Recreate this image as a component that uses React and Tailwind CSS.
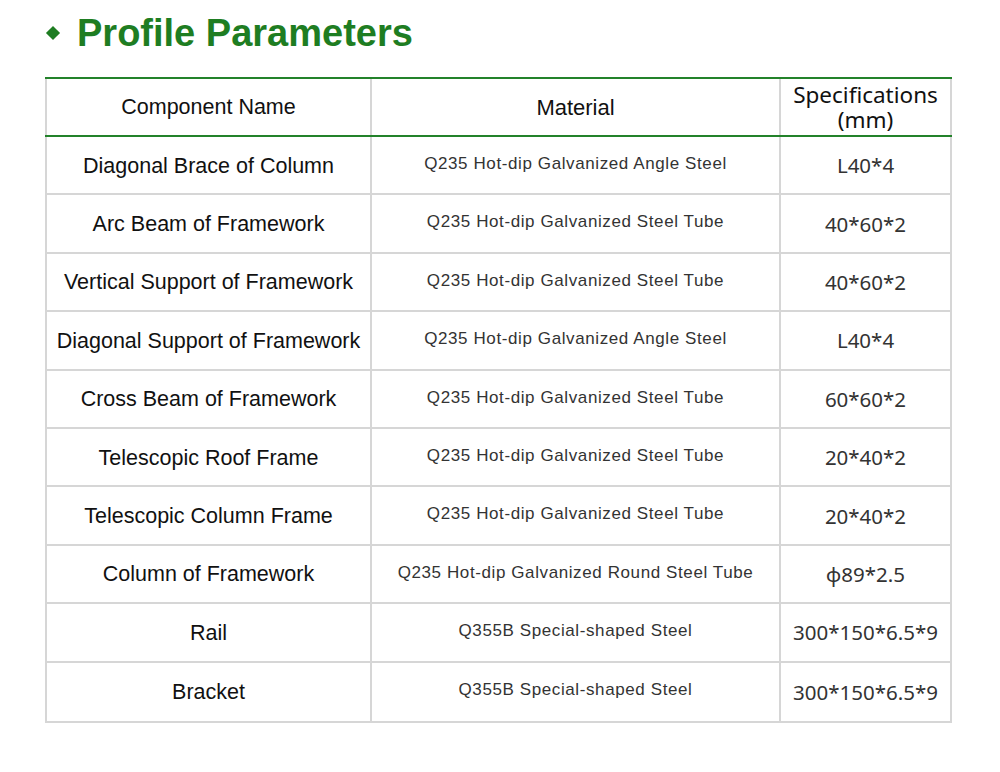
import React from "react";

const rows = [
  ["Diagonal Brace of Column", "Q235 Hot-dip Galvanized Angle Steel", "L40*4"],
  ["Arc Beam of Framework", "Q235 Hot-dip Galvanized Steel Tube", "40*60*2"],
  ["Vertical Support of Framework", "Q235 Hot-dip Galvanized Steel Tube", "40*60*2"],
  ["Diagonal Support of Framework", "Q235 Hot-dip Galvanized Angle Steel", "L40*4"],
  ["Cross Beam of Framework", "Q235 Hot-dip Galvanized Steel Tube", "60*60*2"],
  ["Telescopic Roof Frame", "Q235 Hot-dip Galvanized Steel Tube", "20*40*2"],
  ["Telescopic Column Frame", "Q235 Hot-dip Galvanized Steel Tube", "20*40*2"],
  ["Column of Framework", "Q235 Hot-dip Galvanized Round Steel Tube", "ф89*2.5"],
  ["Rail", "Q355B Special-shaped Steel", "300*150*6.5*9"],
  ["Bracket", "Q355B Special-shaped Steel", "300*150*6.5*9"],
];

export default function App() {
  return (
    <div className="w-[1000px] h-[772px] bg-white font-['Liberation_Sans',Arial,sans-serif]">
      <div className="flex items-center pl-[46px] pt-[13px] h-[53px]">
        <span className="w-[10px] h-[10px] bg-[#1e7d22] rotate-45 ml-[2px] mr-[19px]"></span>
        <span className="text-[38px] leading-none font-bold text-[#1e7d22]">Profile Parameters</span>
      </div>
      <div className="ml-[45px] mt-[24px] w-[907px] border-l-2 border-r-2 border-b-2 border-[#d6d6d6]">
        <div className="flex h-[60px] border-t-2 border-b-2 border-t-[#23822a] border-b-[#23822a] -mr-[2px] -ml-[2px] pl-[2px] pr-[2px]">
          <div className="w-[323px] flex items-center justify-center text-[21.5px] text-[#111]">Component Name</div>
          <div className="w-[409px] border-l-2 border-[#d6d6d6] flex items-center justify-center text-[22px] text-[#111]">Material</div>
          <div className="flex-1 border-l-2 border-[#d6d6d6] flex flex-col items-center justify-center text-center text-[22.5px] leading-[25px] text-[#111] font-['Noto_Sans',sans-serif]">
            <span>Specifications</span>
            <span>(mm)</span>
          </div>
        </div>
        {rows.map((r, i) => (
          <div
            key={i}
            className={`flex h-[58.4px] ${i < rows.length - 1 ? "border-b-2 border-[#d6d6d6]" : ""}`}
          >
            <div className="w-[323px] flex items-center justify-center text-[21.5px] text-[#111] pt-[1px]">{r[0]}</div>
            <div className="w-[409px] border-l-2 border-[#d6d6d6] flex items-center justify-center text-[17px] tracking-[0.6px] text-[#333] pb-[3px]">{r[1]}</div>
            <div className="flex-1 border-l-2 border-[#d6d6d6] flex items-center justify-center text-[20.5px] text-[#333] font-['Noto_Sans',sans-serif] pt-[1px]">{r[2]}</div>
          </div>
        ))}
      </div>
    </div>
  );
}
